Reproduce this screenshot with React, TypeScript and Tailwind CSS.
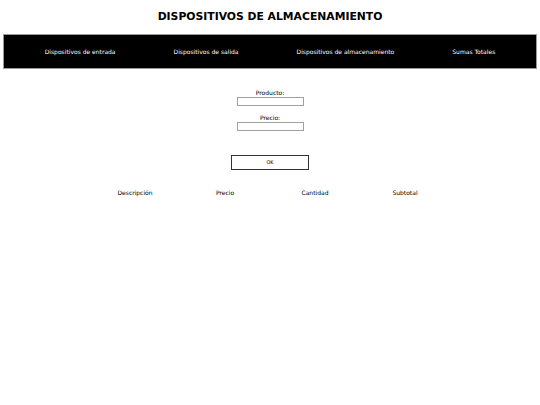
import React from 'react';

const navItems = [
  'Dispositivos de entrada',
  'Dispositivos de salida',
  'Dispositivos de almacenamiento',
  'Sumas Totales',
];

const columns = ['Descripción', 'Precio', 'Cantidad', 'Subtotal'];

const App: React.FC = () => {
  return (
    <div
      className="min-h-[405px] w-[540px] bg-white text-black"
      style={{ fontFamily: '"DejaVu Sans", sans-serif' }}
    >
      <h1 className="pt-[9px] text-center text-[10.8px] font-bold leading-[16px]">
        DISPOSITIVOS DE ALMACENAMIENTO
      </h1>

      <nav className="mx-[3px] mt-[9px] h-[35px] border border-[#9a9a9a] bg-black">
        <ul className="flex h-full items-center justify-center gap-[58px] text-[6px] text-white">
          {navItems.map(item => (
            <li key={item}>{item}</li>
          ))}
        </ul>
      </nav>

      <form className="mt-[20px] flex flex-col items-center text-[6px]">
        <label className="leading-[8px]">Producto:</label>
        <input className="h-[9px] w-[67px] border border-[#a0a0a0]" />
        <label className="mt-[8px] leading-[8px]">Precio:</label>
        <input className="h-[9px] w-[67px] border border-[#a0a0a0]" />
        <button
          type="button"
          className="mt-[24px] h-[15px] w-[78px] border border-[#333333] text-[5px]"
        >
          OK
        </button>
      </form>

      <div className="mx-auto mt-[19px] grid w-[360px] grid-cols-4 text-center text-[6px] leading-[8px]">
        {columns.map(col => (
          <div key={col}>{col}</div>
        ))}
      </div>
    </div>
  );
};

export default App;
